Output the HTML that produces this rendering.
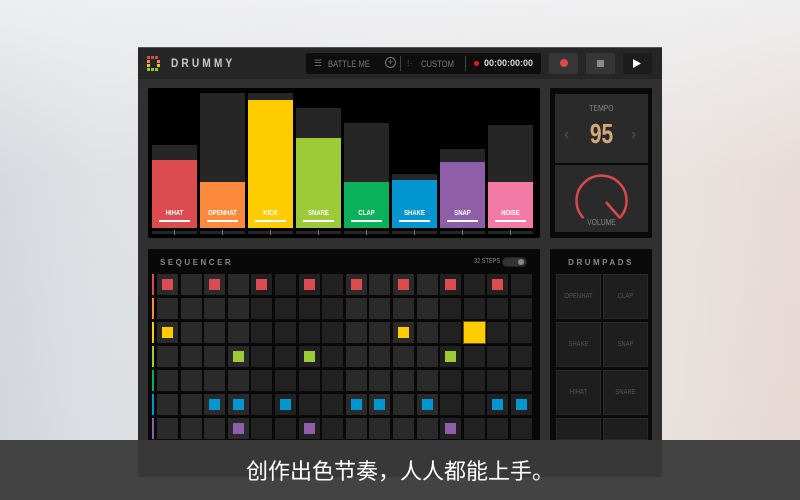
<!DOCTYPE html>
<html><head><meta charset="utf-8">
<style>
*{margin:0;padding:0;box-sizing:border-box}
body{width:800px;height:500px;overflow:hidden;position:relative;font-family:"Liberation Sans","Noto Sans CJK SC",sans-serif;
background:linear-gradient(90deg,#cfd4d9 0%,#dcdfe3 12%,#e6e4e4 50%,#ebe1dc 85%,#e9d6cf 100%);}
.bgv{position:absolute;left:0;top:0;width:800px;height:440px;background:linear-gradient(180deg,rgba(240,241,243,.9) 0%,rgba(230,230,232,.3) 40%,rgba(220,222,226,.2) 100%)}
.a{position:absolute}
.win{left:138px;top:47px;width:524px;height:430px;background:#303030;border-top:1px solid #555}
.top{left:138px;top:48px;width:524px;height:31px;background:#262626}
.t{color:#7a7a7a;font-size:9px;font-family:"Liberation Sans Narrow","Liberation Sans",sans-serif;position:absolute}
.lbl{position:absolute;color:#fff;font-size:7px;font-weight:bold;font-family:"Liberation Sans Narrow","Liberation Sans",sans-serif;text-align:center;width:45px;transform:scaleX(.85)}
</style></head><body>
<div class="bgv"></div>
<div class="a win"></div>
<div class="a top"></div>
<svg class="a" style="left:146px;top:55px" width="16" height="18">
<g fill="#d24c4c"><rect x="1" y="1" width="3" height="3"/><rect x="5" y="1" width="3" height="3"/><rect x="9" y="1" width="3" height="3"/></g>
<g fill="#f08a3a"><rect x="1" y="5" width="3" height="3"/><rect x="11" y="5" width="3" height="3"/></g>
<g fill="#f2c21a"><rect x="1" y="9" width="3" height="3"/><rect x="11" y="9" width="3" height="3"/></g>
<g fill="#8cc63e"><rect x="1" y="13" width="3" height="3"/><rect x="5" y="13" width="3" height="3"/><rect x="9" y="13" width="3" height="3"/></g>
</svg>
<div class="a" style="left:171px;top:56px;color:#c8c8c8;font-size:12px;font-weight:bold;letter-spacing:3.6px;transform:scaleX(.85);transform-origin:left">DRUMMY</div>
<div class="a" style="left:306px;top:53px;width:235px;height:21px;background:#0e0e0e;border-radius:2px"></div>
<div class="t" style="left:314px;top:58px;color:#777">☰</div>
<div class="t" style="left:328px;top:59px;transform:scaleX(.85);transform-origin:left">BATTLE ME</div>
<div class="a" style="left:385px;top:57px;width:11px;height:11px;border:1px solid #777;border-radius:50%;color:#888;font-size:9px;line-height:9px;text-align:center">+</div>
<div class="a" style="left:400px;top:56px;width:1px;height:15px;background:#444"></div>
<div class="t" style="left:407px;top:58px;color:#555">⁞·</div>
<div class="t" style="left:421px;top:59px;transform:scaleX(.85);transform-origin:left">CUSTOM</div>
<div class="a" style="left:465px;top:56px;width:1px;height:15px;background:#444"></div>
<div class="a" style="left:474px;top:61px;width:5px;height:5px;border-radius:50%;background:#e01c1c"></div>
<div class="a" style="left:484px;top:58px;color:#ddd;font-size:9px;font-weight:bold">00:00:00:00</div>
<div class="a" style="left:549px;top:53px;width:29px;height:21px;background:#363636;border-radius:2px"></div>
<div class="a" style="left:560px;top:59px;width:8px;height:8px;border-radius:50%;background:#e0484c"></div>
<div class="a" style="left:586px;top:53px;width:29px;height:21px;background:#363636;border-radius:2px"></div>
<div class="a" style="left:597px;top:60px;width:7px;height:7px;background:#8a8a8a"></div>
<div class="a" style="left:623px;top:53px;width:29px;height:21px;background:#1c1c1c;border-radius:2px"></div>
<svg class="a" style="left:632px;top:58px" width="10" height="11"><path d="M1 1L9 5.5L1 10Z" fill="#fff"/></svg>
<div class="a" style="left:148px;top:88px;width:392px;height:150px;background:#000;border-radius:2px"></div>
<div id="bars"></div>
<div class="a" style="left:550px;top:88px;width:102px;height:150px;background:#0a0a0a;border-radius:2px"></div>
<div class="a" style="left:555px;top:94px;width:93px;height:69px;background:#2a2a2a"></div>
<div class="a" style="left:555px;top:165px;width:93px;height:67px;background:#2a2a2a"></div>
<div class="t" style="left:555px;top:104px;width:93px;text-align:center;font-size:8px;color:#888;transform:scaleX(.85)">TEMPO</div>
<div class="a" style="left:555px;top:118px;width:93px;text-align:center;font-size:28px;font-weight:bold;color:#d6a877;transform:scaleX(.75);line-height:32px">95</div>
<div class="a" style="left:564px;top:126px;color:#555;font-size:16px">‹</div>
<div class="a" style="left:631px;top:126px;color:#555;font-size:16px">›</div>
<svg class="a" style="left:555px;top:165px" width="93" height="67">
<path d="M28.5 53 A25 25 0 1 1 64.5 53" fill="none" stroke="#d84a4c" stroke-width="2.5"/>
<line x1="51" y1="37" x2="65" y2="53" stroke="#d84a4c" stroke-width="2.5"/>
</svg>
<div class="t" style="left:555px;top:218px;width:93px;text-align:center;font-size:8px;color:#888;transform:scaleX(.85)">VOLUME</div>
<div class="a" style="left:148px;top:249px;width:392px;height:200px;background:#080808;border-radius:2px"></div>
<div class="a" style="left:160px;top:258px;color:#888;font-size:8px;font-weight:bold;letter-spacing:2.5px">SEQUENCER</div>
<div class="t" style="left:474px;top:258px;font-size:7px;color:#888;transform:scaleX(.8);transform-origin:left">32 STEPS</div>
<div class="a" style="left:502px;top:257px;width:25px;height:10px;border-radius:5px;background:#333;border:1px solid #222"></div>
<div class="a" style="left:518px;top:259px;width:6px;height:6px;border-radius:50%;background:#888"></div>
<div id="seq"></div>
<div class="a" style="left:550px;top:249px;width:102px;height:200px;background:#0a0a0a;border-radius:2px"></div>
<div class="a" style="left:550px;top:258px;width:102px;text-align:center;color:#888;font-size:8px;font-weight:bold;letter-spacing:2.5px">DRUMPADS</div>
<div id="pads"></div>
<div class="a" style="left:0;top:440px;width:800px;height:60px;background:#434343"></div>
<div class="a" style="left:138px;top:440px;width:524px;height:37px;background:#383838"></div>
<div class="a" style="left:0;top:454px;width:800px;text-align:center;color:#fff;font-size:22px;font-family:'Noto Sans CJK SC',sans-serif">创作出色节奏，人人都能上手。</div>
<script>
var bars=[["HIHAT","#dc4b50",145,160],["OPENHAT","#fb8a3c",93,182],["KICK","#ffcc00",93,100],["SNARE","#9ccb37",108,138],["CLAP","#0ab15a",123,182],["SHAKE","#0496d1",174,180],["SNAP","#8e5fa8",149,162],["NOISE","#f37aa5",125,182]];
var h="";
bars.forEach(function(b,i){var x=152+i*48;
h+='<div class="a" style="left:'+x+'px;top:'+b[2]+'px;width:45px;height:'+(228-b[2])+'px;background:#262626"></div>';
h+='<div class="a" style="left:'+x+'px;top:'+b[3]+'px;width:45px;height:'+(228-b[3])+'px;background:'+b[1]+'"></div>';
h+='<div class="lbl" style="left:'+x+'px;top:210px">'+b[0]+'</div>';
h+='<div class="a" style="left:'+(x+7)+'px;top:220px;width:31px;height:2px;background:#fff"></div>';
h+='<div class="a" style="left:'+x+'px;top:231px;width:45px;height:3px;background:#262626"></div>';
h+='<div class="a" style="left:'+(x+22)+'px;top:230px;width:1px;height:5px;background:#777"></div>';
});
document.getElementById("bars").innerHTML=h;
var cols=["#dc4b50","#fb8a3c","#ffcc00","#9ccb37","#0ab15a","#0496d1","#8e5fa8"];
var act=[[0,2,4,6,8,10,12,14],[],[0,10],[3,6,12],[],[2,3,5,8,9,11,14,15],[3,6,12]];
h="";
for(var r=0;r<7;r++){var y=274+r*24;var hh=(r==6)?Math.min(21,440-y):21;
h+='<div class="a" style="left:152px;top:'+y+'px;width:2px;height:'+hh+'px;background:'+cols[r]+'"></div>';
for(var c=0;c<16;c++){var x=Math.round(157+c*23.6);var g=Math.floor(c/4)%2==0;
h+='<div class="a" style="left:'+x+'px;top:'+y+'px;width:21px;height:'+hh+'px;background:'+(g?'#2a2a2a':'#212121')+'"></div>';
if(act[r].indexOf(c)>=0)h+='<div class="a" style="left:'+(x+5)+'px;top:'+(y+5)+'px;width:11px;height:11px;background:'+cols[r]+'"></div>';}}
h+='<div class="a" style="left:'+(Math.round(157+13*23.6)-1)+'px;top:321px;width:23px;height:23px;background:#ffcc00;border:1px solid #6b5a10"></div>';
document.getElementById("seq").innerHTML=h;
var pads=[["OPENHAT","CLAP"],["SHAKE","SNAP"],["HIHAT","SNARE"],["",""]];h="";
pads.forEach(function(p,r){var y=274+r*48;[556,603].forEach(function(x,c){var hh=r==3?Math.max(0,440-y):45;
h+='<div class="a" style="left:'+x+'px;top:'+y+'px;width:45px;height:'+hh+'px;background:#1e1e1e;border:1px solid #2a2a2a"></div>';
if(p[c])h+='<div class="t" style="left:'+x+'px;top:'+(y+19)+'px;width:45px;text-align:center;font-size:7px;color:#555;transform:scaleX(.85)">'+p[c]+'</div>';});});
document.getElementById("pads").innerHTML=h;
</script>
</body></html>
